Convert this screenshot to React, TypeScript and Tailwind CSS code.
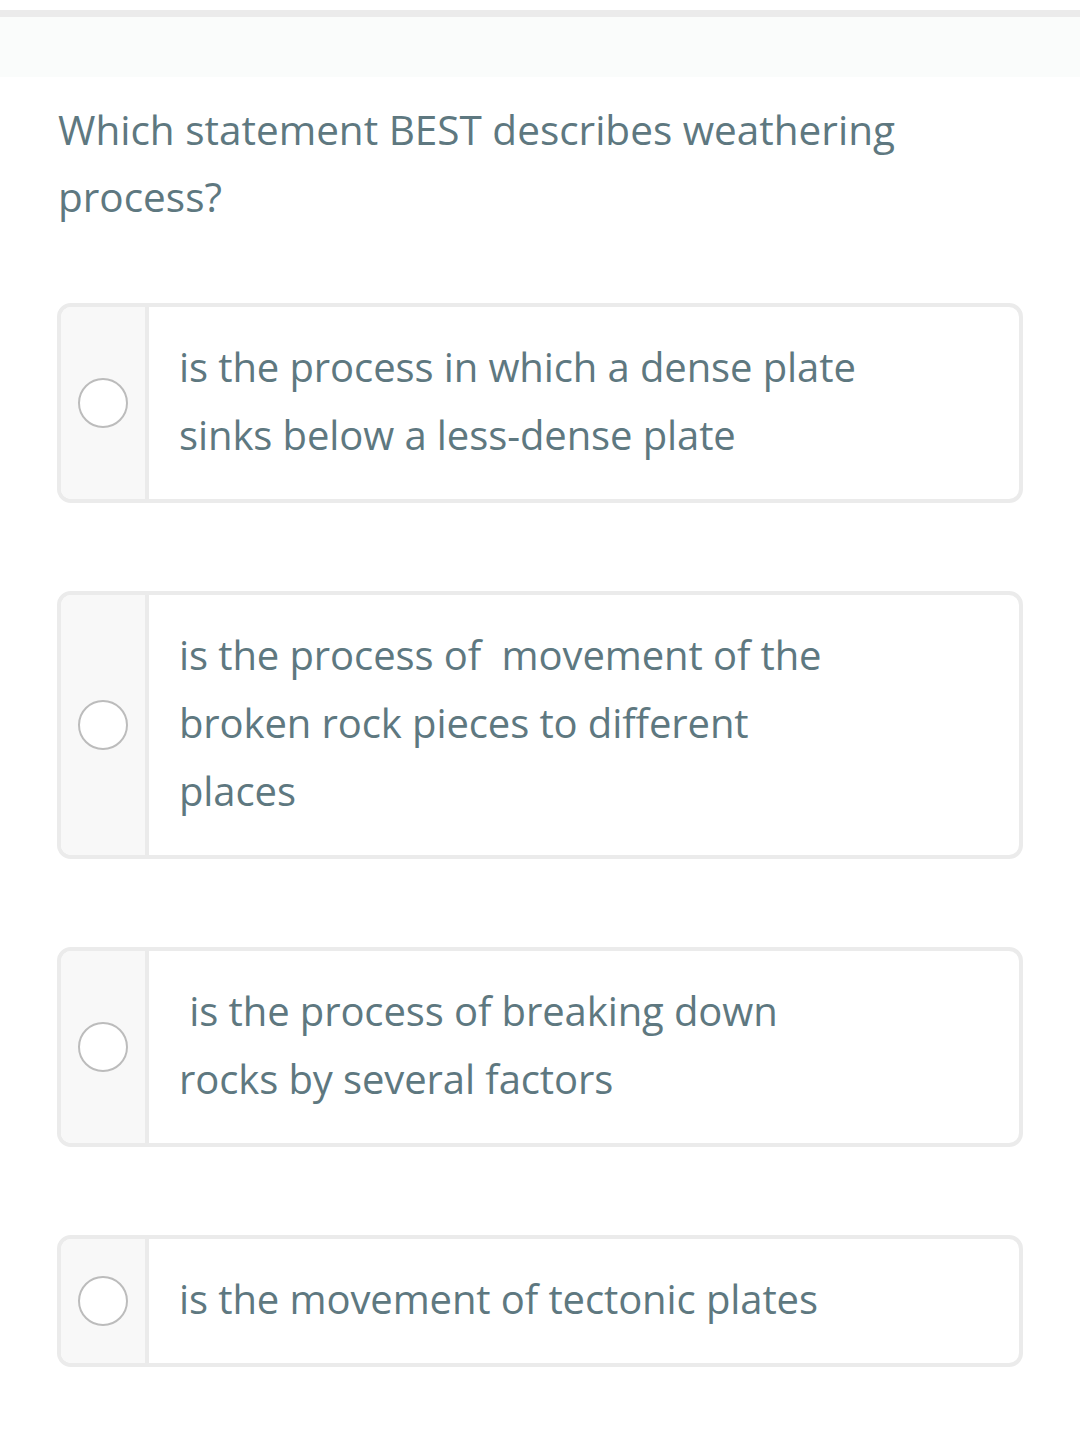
import React from 'react'

const OPTIONS: string[][] = [
  ['is the process in which a dense plate', 'sinks below a less-dense plate'],
  ['is the process of \u00a0movement of the', 'broken rock pieces to different', 'places'],
  ['\u00a0is the process of breaking down', 'rocks by several factors'],
  ['is the movement of tectonic plates'],
]

function Option({ lines }: { lines: string[] }) {
  return (
    <div className="flex rounded-[14px] border-4 border-[#ebebeb] overflow-hidden bg-white">
      <div className="w-[88px] shrink-0 bg-[#f8f8f8] border-r-4 border-[#ebebeb] flex items-center justify-center">
        <span className="w-[50px] h-[50px] rounded-full border-2 border-[#bcbcbc] bg-white" />
      </div>
      <div className="flex-1 pl-[30px] pr-6 pt-[26px] pb-[30px] text-[40px] tracking-[-0.1px] leading-[68px] text-[#5e7880]">
        {lines.map((l, i) => (
          <div key={i} className="whitespace-pre">{l}</div>
        ))}
      </div>
    </div>
  )
}

export default function App() {
  return (
    <div className="min-h-[1429px] bg-white" style={{ fontFamily: '"Open Sans", sans-serif' }}>
      <div className="h-[10px]" />
      <div className="h-[7px] bg-[#ebebeb]" />
      <div className="h-[60px] bg-[#fafcfb]" />

      <div className="px-[57px]">
        <h1 className="mt-[19px] pl-px text-[40.5px] leading-[67px] text-[#5e7880] font-normal">
          Which statement BEST describes weathering
          <br />
          process?
        </h1>

        <div className="mt-[73px] flex flex-col gap-[88px]">
          {OPTIONS.map((o, i) => (
            <Option key={i} lines={o} />
          ))}
        </div>
      </div>
    </div>
  )
}
